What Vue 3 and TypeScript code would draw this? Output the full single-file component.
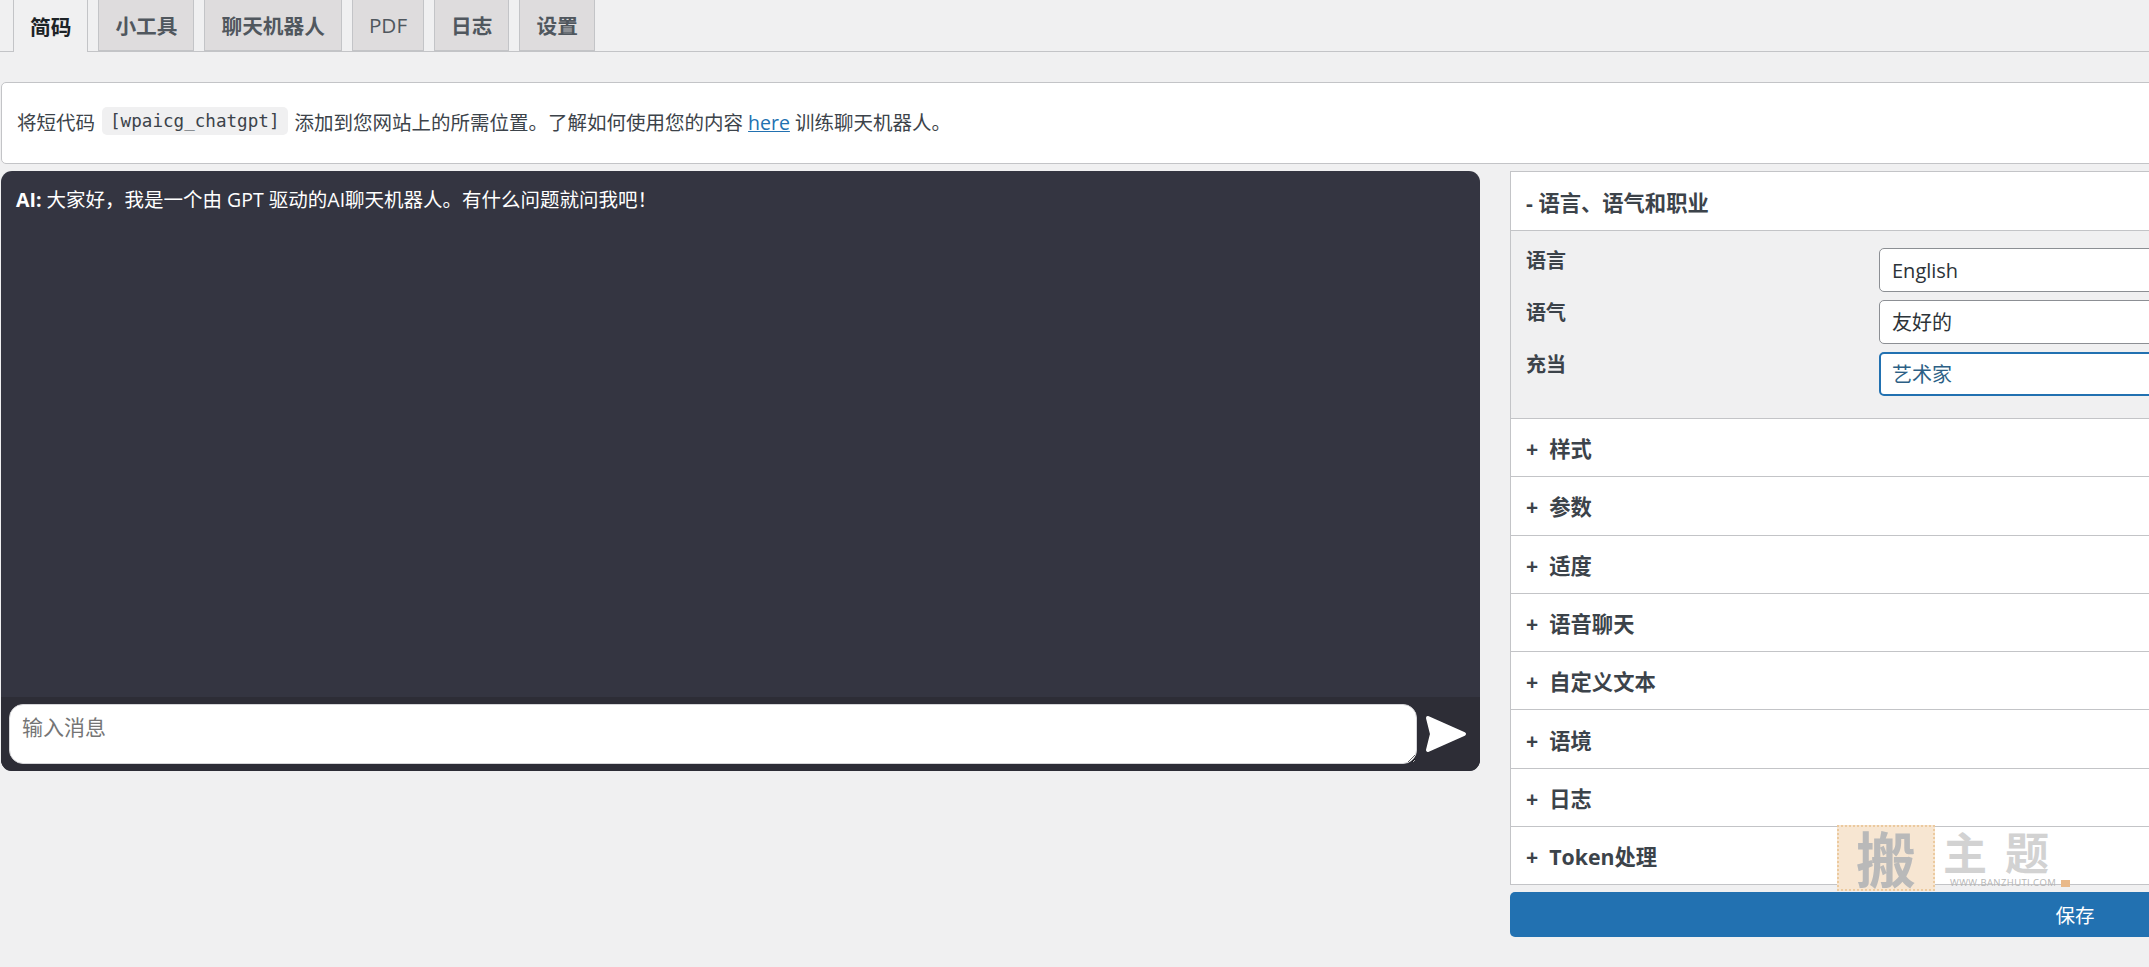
<script setup lang="ts">
const tabs = ['简码', '小工具', '聊天机器人', 'PDF', '日志', '设置']

const fields = [
  { label: '语言', value: 'English', focused: false },
  { label: '语气', value: '友好的', focused: false },
  { label: '充当', value: '艺术家', focused: true },
]

const sections = ['样式', '参数', '适度', '语音聊天', '自定义文本', '语境', '日志', 'Token处理']
</script>

<template>
  <div class="page">
    <nav class="tabs">
      <a
        v-for="(tab, i) in tabs"
        :key="tab"
        class="tab"
        :class="{ active: i === 0, latin: tab === 'PDF' }"
      >{{ tab }}</a>
    </nav>

    <div class="notice">
      <span>将短代码</span>
      <code>[wpaicg_chatgpt]</code>
      <span>添加到您网站上的所需位置。了解如何使用您的内容 <a class="link">here</a> 训练聊天机器人。</span>
    </div>

    <div class="columns">
      <section class="chat">
        <div class="messages">
          <p><strong>AI:</strong> 大家好，我是一个由 GPT 驱动的AI聊天机器人。有什么问题就问我吧！</p>
        </div>
        <div class="composer">
          <textarea class="input" placeholder="输入消息"></textarea>
          <button class="send" type="button" aria-label="发送">
            <svg width="44" height="40" viewBox="0 0 44 40">
              <path d="M4 4 L40 20 L4 36 L8 20 Z" fill="#fff" stroke="#fff" stroke-width="4" stroke-linejoin="round" />
            </svg>
          </button>
        </div>
      </section>

      <aside class="side">
        <div class="accordion">
          <div class="head">- 语言、语气和职业</div>
          <div class="body">
            <div v-for="f in fields" :key="f.label" class="field">
              <label>{{ f.label }}</label>
              <select class="control" :class="{ focused: f.focused }">
                <option>{{ f.value }}</option>
              </select>
            </div>
          </div>
          <div v-for="s in sections" :key="s" class="head row">+&nbsp;&nbsp;{{ s }}</div>
        </div>
        <button class="save" type="button">保存</button>
      </aside>
    </div>

    <div class="mark" aria-hidden="true">
      <span class="stamp">搬</span>
      <div class="mark-text">
        <span class="mark-title">主题</span>
        <span class="mark-url">WWW.BANZHUTI.COM<i class="mark-dot"></i></span>
      </div>
    </div>
  </div>
</template>

<style>
html, body {
  margin: 0;
  background: #f0f0f1;
  overflow: hidden;
}
</style>

<style scoped>
.page {
  position: relative;
  width: 2234px;
  height: 967px;
  background: #f0f0f1;
  font-family: "Open Sans", "Noto Sans CJK SC", sans-serif;
  font-size: 19.5px;
  color: #3c434a;
}

.tabs {
  display: flex;
  gap: 10px;
  height: 51px;
  padding-left: 13px;
  border-bottom: 1px solid #c3c4c7;
}

.tab {
  display: flex;
  align-items: center;
  justify-content: center;
  padding: 0 16px;
  height: 51px;
  background: #dedcdd;
  border: 1px solid #c3c4c7;
  border-top: 0;
  box-sizing: border-box;
  font-size: 20.7px;
  font-weight: 700;
  color: #50575e;
}

.tab.latin {
  font-weight: 500;
}

.tab.active {
  height: 52px;
  background: #f0f0f1;
  border-bottom: 0;
  color: #1d2327;
}

.notice {
  display: flex;
  align-items: center;
  gap: 7px;
  height: 82px;
  margin-top: 30px;
  margin-left: 1px;
  padding: 0 0 4px 15px;
  background: #fff;
  border: 1px solid #c3c4c7;
  border-radius: 5px;
  box-sizing: border-box;
}

.notice code {
  padding: 4px 8px;
  background: #f0f0f1;
  border-radius: 5px;
  font-family: "DejaVu Sans Mono", "Liberation Mono", monospace;
  font-size: 17.6px;
  color: #3c434a;
}

.link {
  color: #2271b1;
  text-decoration: underline;
}

.columns {
  display: flex;
  align-items: flex-start;
  gap: 30px;
  margin-top: 7px;
  margin-left: 1px;
}

.chat {
  display: flex;
  flex-direction: column;
  width: 1479px;
  height: 600px;
  flex: none;
  border-radius: 11px;
  overflow: hidden;
  background: #343541;
}

.messages {
  flex: 1;
  padding: 16px 15px;
  color: #fff;
}

.messages p {
  margin: 0;
  line-height: 26px;
}

.composer {
  display: flex;
  align-items: center;
  gap: 7px;
  height: 74px;
  padding: 0 8px;
  background: #2d2d36;
  box-sizing: border-box;
}

.input {
  flex: none;
  display: block;
  width: 1408px;
  height: 60px;
  padding: 9px 12px;
  background: #fff;
  border: 1px solid #d5d5d8;
  border-radius: 14px;
  box-sizing: border-box;
  outline: none;
  resize: vertical;
  font: 21px/26px "Open Sans", "Noto Sans CJK SC", sans-serif;
  color: #3c434a;
}

.input::placeholder {
  color: #757575;
}

.send {
  display: flex;
  padding: 0;
  background: none;
  border: 0;
}

.side {
  display: flex;
  flex-direction: column;
  gap: 7px;
  flex: 1;
}

.accordion {
  background: #fff;
  border: 1px solid #c3c4c7;
  border-bottom: 0;
}

.head {
  display: flex;
  align-items: center;
  height: 58px;
  padding-left: 15px;
  background: #fff;
  border-bottom: 1px solid #c3c4c7;
  font-size: 21.3px;
  font-weight: 700;
  color: #3c434a;
}

.row {
  height: 57.3px;
}

.body {
  display: flex;
  flex-direction: column;
  gap: 8px;
  height: 188px;
  padding-top: 17px;
  background: #f0f0f1;
  border-bottom: 1px solid #c3c4c7;
  box-sizing: border-box;
}

.field {
  display: flex;
  align-items: flex-start;
}

.field label {
  width: 368px;
  flex: none;
  padding-left: 15px;
  box-sizing: border-box;
  font-size: 20px;
  font-weight: 700;
  line-height: 26px;
}

.control {
  appearance: none;
  width: 760px;
  height: 44px;
  padding: 0 12px;
  background: #fff;
  border: 1px solid #8c8f94;
  border-radius: 5px;
  box-sizing: border-box;
  font: 20px "Open Sans", "Noto Sans CJK SC", sans-serif;
  color: #2c3338;
}

.control.focused {
  border: 2px solid #2271b1;
  color: #2c5f85;
  padding: 0 11px;
}

.save {
  width: 100%;
  height: 45px;
  background: #2271b1;
  border: 0;
  border-radius: 5px;
  font: 19.5px "Open Sans", "Noto Sans CJK SC", sans-serif;
  color: #fff;
}

.mark {
  position: absolute;
  left: 1837px;
  top: 825px;
  display: flex;
  gap: 8px;
  pointer-events: none;
}

.stamp {
  width: 98px;
  height: 66px;
  background: #f7e6d2;
  border: 2px dotted #ecca9f;
  box-sizing: border-box;
  font: 700 60px/60px "Noto Sans CJK SC", sans-serif;
  text-align: center;
  color: #b9b9b9;
}

.mark-text {
  display: flex;
  flex-direction: column;
}

.mark-title {
  height: 52px;
  font: 700 44px/52px "Noto Sans CJK SC", sans-serif;
  letter-spacing: 18px;
  color: #d2d2d2;
}

.mark-url {
  display: flex;
  align-items: center;
  gap: 5px;
  margin-left: 7px;
  font: 9.5px/12px "Open Sans", sans-serif;
  letter-spacing: 0.4px;
  color: #b5b5b5;
}

.mark-dot {
  width: 9px;
  height: 7px;
  background: #e9b98a;
}
</style>
